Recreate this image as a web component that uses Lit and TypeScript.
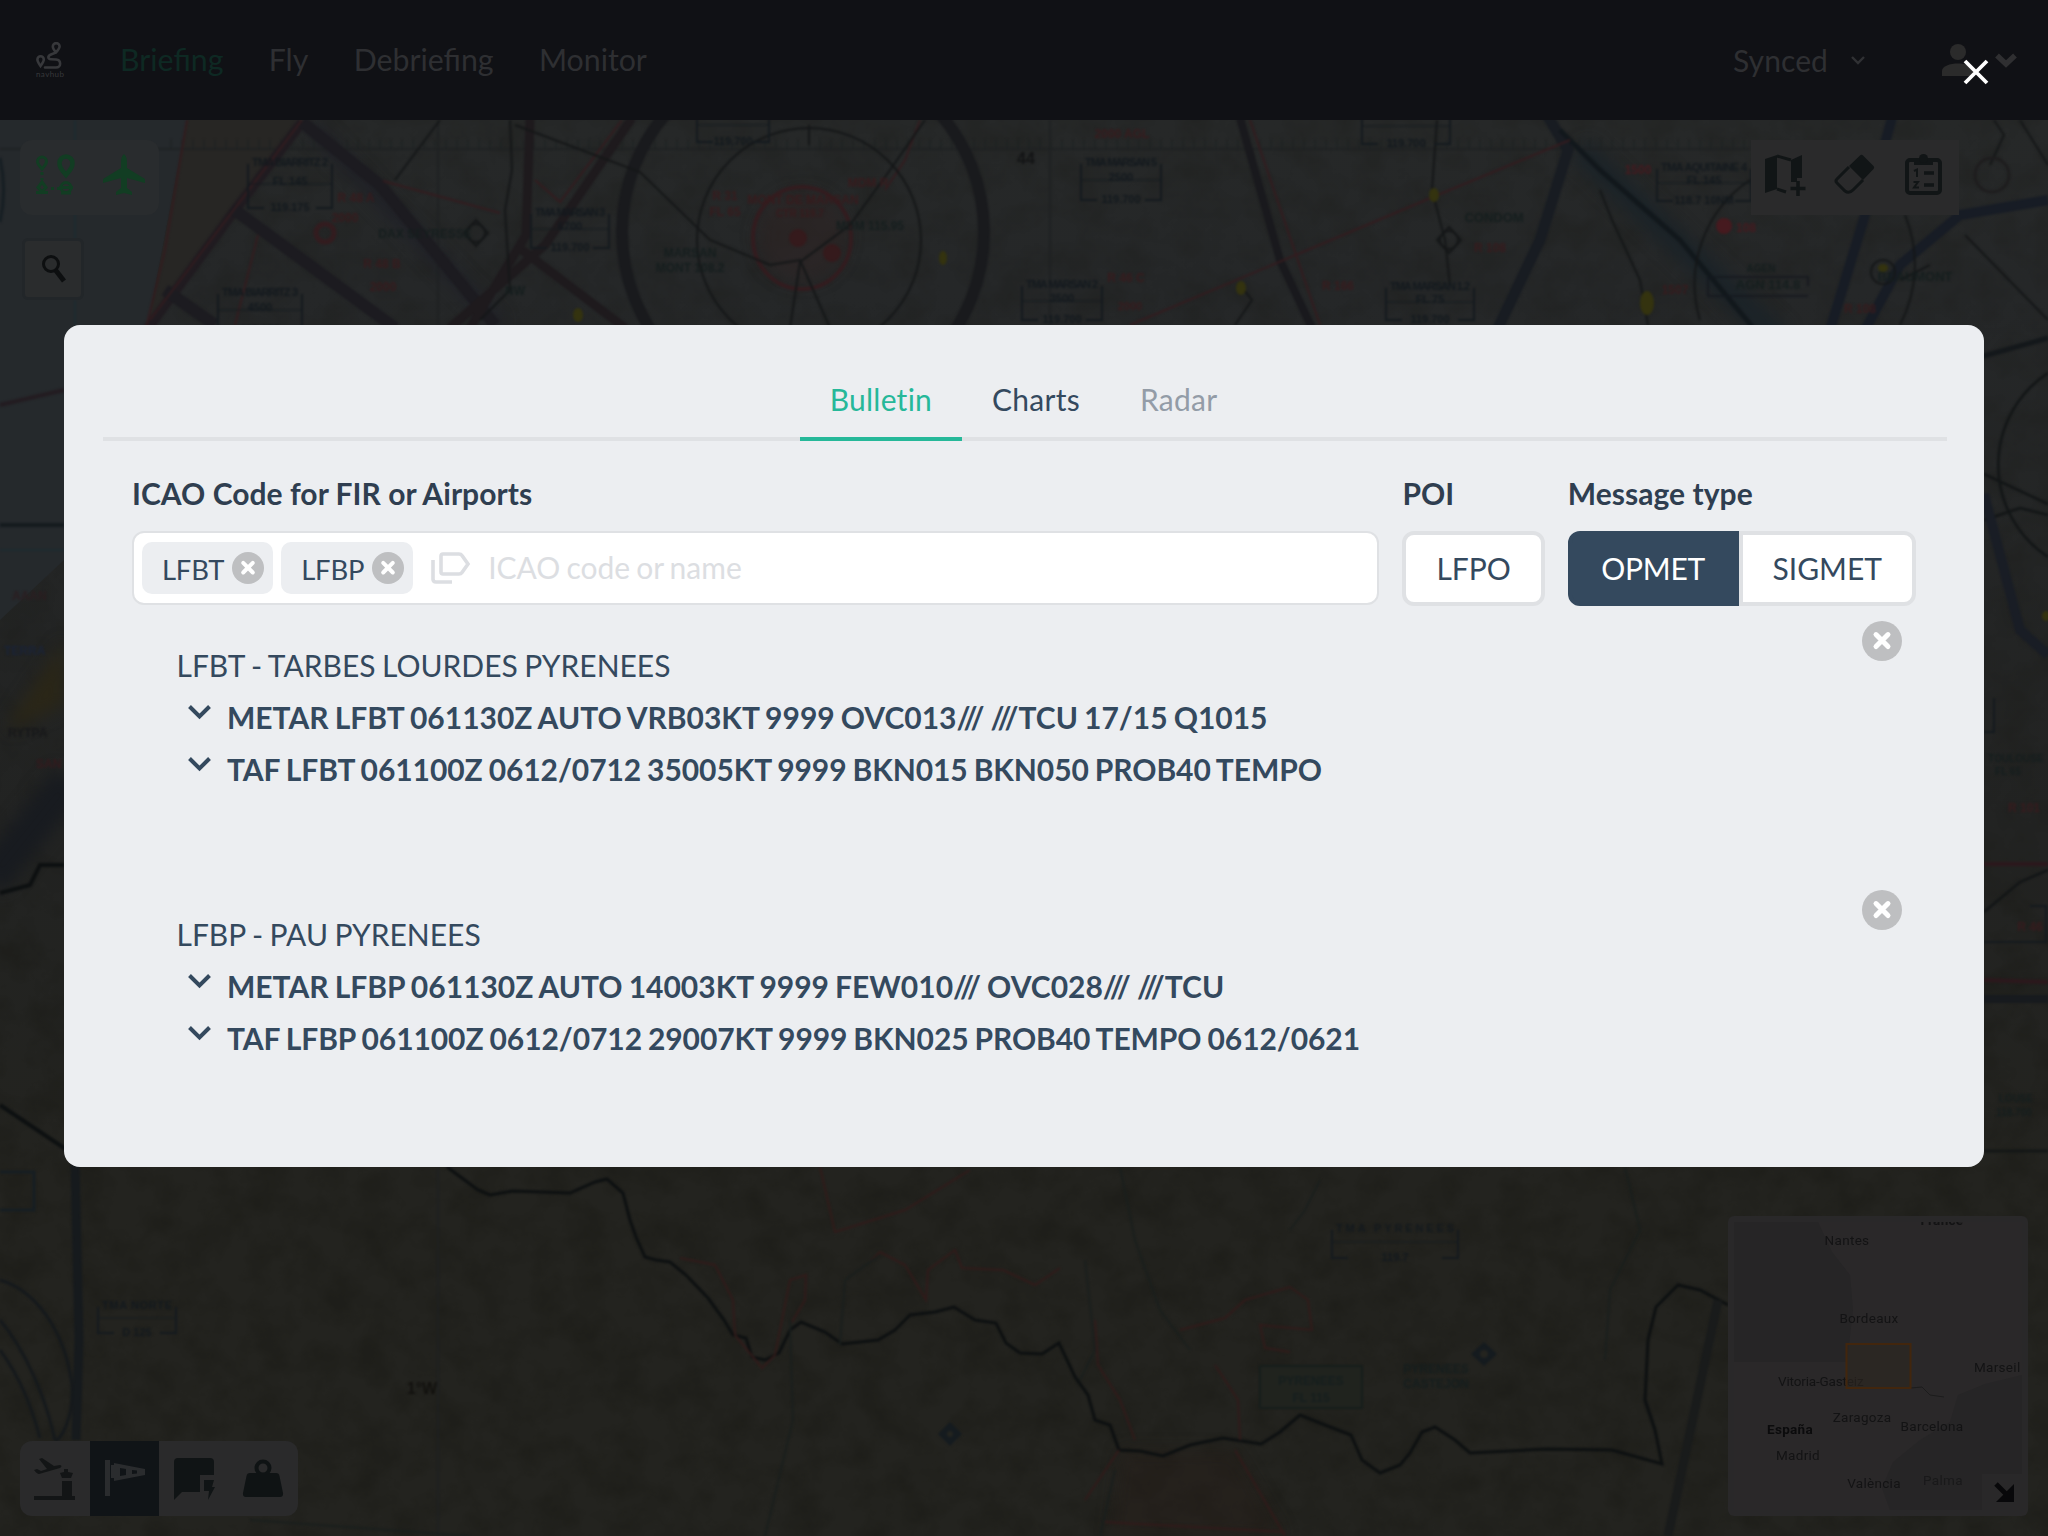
import { LitElement, html, svg, css } from "lit";
import { customElement, property } from "lit/decorators.js";

interface Station { code: string; name: string; lines: string[]; }

const STATIONS: Station[] = [
  {
    code: "LFBT",
    name: "TARBES LOURDES PYRENEES",
    lines: [
      "METAR LFBT 061130Z AUTO VRB03KT 9999 OVC013/// ///TCU 17/15 Q1015",
      "TAF LFBT 061100Z 0612/0712 35005KT 9999 BKN015 BKN050 PROB40 TEMPO",
    ],
  },
  {
    code: "LFBP",
    name: "PAU PYRENEES",
    lines: [
      "METAR LFBP 061130Z AUTO 14003KT 9999 FEW010/// OVC028/// ///TCU",
      "TAF LFBP 061100Z 0612/0712 29007KT 9999 BKN025 PROB40 TEMPO 0612/0621",
    ],
  },
];

const removeIcon = (size: number) => html`<svg width=${size} height=${size} viewBox="0 0 40 40">
  <circle cx="20" cy="20" r="20" fill="#bebfc1"></circle>
  <path d="M14 13.600 L26 25.600 M26 13.600 L14 25.600" stroke="#fff" stroke-width="5" stroke-linecap="round"></path>
</svg>`;

const chartBox = (x: number, y: number, w: number, h: number, a: string, b: string, c: string) => svg`
  <g stroke="#141a1f" fill="none" stroke-width="2">
    <path d="M${x} ${y + 4} V${y + h} H${x + 16} M${x + w - 16} ${y + h} H${x + w} V${y + 4}"></path>
    <path d="M${x} ${y + h / 2} H${x + w}" stroke-width="1"></path>
  </g>
  <g fill="#13191e" font-size="11" font-weight="700" text-anchor="middle">
    ${a ? svg`<text x=${x + w / 2} y=${y + 6} textLength=${w - 8}>${a}</text>` : ""}
    ${b ? svg`<text x=${x + w / 2} y=${y + h / 2 + 1}>${b}</text>` : ""}
    <text x=${x + w / 2} y=${y + h + 3}>${c}</text>
  </g>`;

@customElement("chart-map")
class ChartMap extends LitElement {
  static styles = css`
    :host { display: block; width: 2048px; height: 1416px; }
    svg { display: block; }
    text { font-family: "Liberation Sans", sans-serif; }
  `;
  render() {
    return html`<svg width="2048" height="1416" viewBox="0 120 2048 1416">
      <defs>
        <linearGradient id="land" x1="0" y1="0" x2="0" y2="1">
          <stop offset="0" stop-color="#262828"></stop>
          <stop offset="0.12" stop-color="#252728"></stop>
          <stop offset="0.5" stop-color="#222322"></stop>
          <stop offset="0.75" stop-color="#23231f"></stop>
          <stop offset="1" stop-color="#23231f"></stop>
        </linearGradient>
        <filter id="soft" x="-5%" y="-5%" width="110%" height="110%" color-interpolation-filters="sRGB"><feGaussianBlur stdDeviation="0.9"></feGaussianBlur></filter>
        <filter id="wide" x="-20%" y="-20%" width="140%" height="140%" color-interpolation-filters="sRGB"><feGaussianBlur stdDeviation="8"></feGaussianBlur></filter>
        <filter id="relief" x="0" y="0" width="100%" height="100%" color-interpolation-filters="sRGB">
          <feTurbulence type="fractalNoise" baseFrequency="0.028 0.032" numOctaves="5" seed="8"></feTurbulence>
          <feColorMatrix values="0 0 0 0 0.09  0 0 0 0 0.09  0 0 0 0 0.07  0 2.4 0 0 -0.95"></feColorMatrix>
        </filter>
      </defs>
      <rect y="120" width="2048" height="1416" fill="url(#land)"></rect>
      <rect y="900" width="2048" height="636" filter="url(#relief)" opacity="0.35"></rect>
      <rect y="120" width="2048" height="780" filter="url(#relief)" opacity="0.2"></rect>
      <path d="M0 120 H187 L148 325 L64 560 L0 620 Z" fill="#25292c"></path>
      <path d="M187 120 H302 L235 215 L148 325 Z" fill="#272624"></path>
      <g filter="url(#wide)">
        <ellipse cx="802" cy="237" rx="45" ry="45" fill="#302423" opacity="0.5"></ellipse>
        <path d="M1580 150 L1780 340" stroke="#1b2328" stroke-width="24"></path>
        <path d="M310 125 L500 325" stroke="#1f2028" stroke-width="12"></path>
        <path d="M10 720 L64 640 V705 L10 730 Z" fill="#2a2617"></path>
        <path d="M-10 880 L70 780" stroke="#181b20" stroke-width="36"></path>
        <path d="M1120 1450 L1235 1450 L1285 1536 H1110 Z" fill="#271d1a" opacity="0.4"></path>
      </g>
      <g filter="url(#soft)" fill="none">
        <g stroke="#1e2122" stroke-width="1.5">
          <path d="M0 149 H1750 M438 120 V325 M438 1167 V1536 M1050 120 V325"></path>
          <path d="M170 144 H1750" stroke-dasharray="2 9" stroke-width="9" opacity="0.6"></path>
          <path d="M75 120 V240 M0 550 H64 M75 300 V325" stroke="#1d2c32"></path>
          <path d="M0 525 H64" stroke="#151b1f" stroke-width="4"></path>
        </g>
        <g stroke="#1c1b20" stroke-width="12">
          <path d="M302 122 L235 210 L148 328" stroke="#201b20" stroke-width="10"></path>
          <path d="M302 122 L380 185 L495 325 M232 208 L395 328 M165 290 L215 325"></path>
          <path d="M632 118 L545 245 L450 328 M530 118 L526 235 L470 328 M522 250 L625 328" stroke="#1e1a1d" stroke-width="9"></path>
          <path d="M1240 118 L1280 260 L1312 328" stroke="#19191d" stroke-width="8"></path>
          <path d="M1545 112 L1568 150 L1540 240 L1498 328" stroke="#181c22" stroke-width="11"></path>
          <path d="M1560 130 L1600 170 L1680 240 L1755 330" stroke="#12181c" stroke-width="5"></path>
          <path d="M1892 118 L1865 215 L1830 330 M2048 200 L1960 215 L1900 265 L1865 330" stroke="#171c25" stroke-width="10"></path>
          <circle cx="803" cy="232" r="181" stroke="#191a1d"></circle>
        </g>
        <g stroke="#331c1f" stroke-width="2">
          <path d="M187 120 L165 250 L146 328 M258 235 L235 325 M383 181 L500 213 M535 180 L560 202 L622 120 M302 120 L150 320"></path>
          <path d="M1570 140 L1433 197 L1130 325 M1250 120 L1320 325 M920 120 L905 160 L885 190"></path>
          <circle cx="325" cy="233" r="9" stroke-width="5"></circle>
          <ellipse cx="802" cy="238" rx="49" ry="51" stroke-width="4"></ellipse>
          <path d="M0 405 L64 390" stroke="#231c21" stroke-width="4"></path>
        </g>
        <g stroke="#151718" stroke-width="2">
          <circle cx="809" cy="240" r="112"></circle>
          <path d="M809 125 V145 M510 120 L512 170 L505 210 L510 290 L480 320 M515 125 L640 172 L710 240 L770 265 L800 260 L830 328 M790 328 L800 262 L850 225 L890 170 L925 120 M1437 120 L1432 190 L1445 240 L1450 285 M440 120 L395 180 M1240 285 L1252 300 L1235 325"></path>
          <path d="M1600 190 L1612 220 L1640 280 L1648 325 M1700 320 A125 125 0 0 1 1750 180 M1900 325 A130 130 0 0 0 1905 215 M1994 120 L2004 135 L1990 165 M2020 120 L2048 165 M1965 235 L2048 320 M1900 280 L1930 265"></path>
          <path d="M476 220 L488 233 L476 246 L464 233 Z M1449 227 L1461 240 L1449 253 L1437 240 Z"></path>
          <circle cx="476" cy="233" r="9"></circle><circle cx="1449" cy="240" r="9"></circle>
          <circle cx="1992" cy="175" r="17" stroke="#1e1d1e" stroke-width="3"></circle>
          <circle cx="1883" cy="272" r="12"></circle>
        </g>
        <g stroke="#0d1011" stroke-width="3">
          <path d="M447 1167 L478 1190 L490 1195 L513 1191 L570 1193 L595 1182 L607 1179 L623 1193 L630 1220 L636 1237 L645 1257 L656 1260 L670 1262 L686 1275 L708 1298 L724 1320 L733 1335 L746 1338 L752 1357 L765 1360 L779 1353 L790 1330 L801 1322 L825 1332 L842 1344 L878 1340 L895 1330 L910 1315 L935 1312 L954 1307 L975 1320 L996 1323 L1006 1343 L1020 1353 L1042 1354 L1059 1343 L1075 1377 L1088 1395 L1095 1420 L1110 1425 L1119 1450 L1140 1451 L1163 1456 L1190 1445 L1223 1438 L1261 1444 L1280 1432 L1300 1415 L1325 1425 L1351 1435 L1362 1460 L1380 1473 L1400 1465 L1410 1453 L1422 1432 L1435 1427 L1455 1440 L1470 1453 L1547 1449 L1612 1450 L1662 1464 L1655 1430 L1645 1400 L1648 1340 L1656 1307 L1678 1285 L1700 1290 L1728 1305"></path>
          <path d="M0 893 L30 885 L40 865 L64 865 M0 1105 L70 1152" stroke-width="4"></path>
        </g>
        <path d="M75 1160 L79 1340 L76 1440" stroke="#161a1d" stroke-width="9"></path>
        <path d="M1718 1300 L1668 1536" stroke="#191b1b" stroke-width="9"></path>
        <path d="M0 1280 C35 1290 65 1330 72 1385 C74 1420 60 1440 55 1441 M0 1320 C25 1350 45 1395 55 1440 M0 1350 C15 1370 30 1400 40 1438" stroke="#15191c" stroke-width="3"></path>
        <g stroke="#311b1a" stroke-width="2">
          <path d="M680 1258 L715 1265 L733 1300 L735 1335 L762 1368 L775 1355 L790 1280 L806 1275 L805 1300 L792 1322 M870 1262 L880 1252 L905 1265 L926 1300 L928 1270 L955 1250 L962 1268 L1003 1270 L1035 1285 L1060 1268 M1095 1320 L1098 1365 L1120 1400 L1135 1440 M1180 1330 L1225 1318 L1245 1300 L1290 1287 L1308 1300 L1312 1330 L1260 1325 L1265 1348 L1290 1352 M1215 1365 L1238 1400 L1240 1440"></path>
          <path d="M820 1167 L835 1232 L905 1210 L970 1170 M1105 1522 L1285 1532 M1119 1450 L1085 1500 M1235 1450 L1285 1536"></path>
        </g>
        <g stroke="#1a1f1d" stroke-width="2">
          <path d="M1120 1167 L1135 1240 L1160 1310 L1190 1350 M1085 1260 L1095 1350 L1080 1380 M790 1320 L793 1420 L765 1536 M840 1345 L845 1280 L880 1255 M1625 1167 L1640 1230 L1610 1290 L1605 1360 M1115 1470 L1100 1536 M250 1520 L470 1536 M1290 1230 L1305 1210 L1320 1180"></path>
        </g>
        <path d="M1980 357 L2048 338" stroke="#14181b" stroke-width="5"></path>
        <path d="M2048 373 A110 110 0 0 0 2048 557 M1984 474 L2048 504 M1984 520 L2020 508 L2048 515 M1984 912 L2020 882 L2048 870 M1984 1151 H2048" stroke="#121516" stroke-width="2.5"></path>
        <path d="M1984 494 L2020 630 L2048 655" stroke="#191d25" stroke-width="10"></path>
        <path d="M1984 864 H2048 M1984 980 L2048 982" stroke="#2c181c" stroke-width="4"></path>
        <path d="M1984 999 H2048" stroke="#171a1e" stroke-width="8"></path>
        <path d="M1994 698 V732 H1984 M2030 906 H2046 V942 H1984" stroke="#141a1f" stroke-width="2"></path>
        <g stroke="none" fill="#34330f">
          <ellipse cx="1434" cy="195" rx="5" ry="7"></ellipse><ellipse cx="1241" cy="288" rx="5" ry="7"></ellipse>
          <ellipse cx="1647" cy="303" rx="7" ry="12"></ellipse><ellipse cx="943" cy="258" rx="4" ry="7"></ellipse>
          <ellipse cx="1883" cy="268" rx="5" ry="4"></ellipse><ellipse cx="578" cy="315" rx="5" ry="7"></ellipse>
          <ellipse cx="2046" cy="616" rx="4" ry="5"></ellipse>
        </g>
        <g stroke="none" fill="#351a1c">
          <circle cx="798" cy="238" r="9"></circle><circle cx="832" cy="253" r="9"></circle>
          <circle cx="1724" cy="226" r="8" fill="#461a1f"></circle>
        </g>
        <g stroke="none">
          ${chartBox(248, 160, 84, 48, "TMA BIARRITZ 2", "FL 145", "119.175")}
          ${chartBox(218, 290, 84, 40, "TMA BIARRITZ 3", "4500", "119.175")}
          ${chartBox(531, 210, 78, 38, "TMA MARSAN 3", "6700", "119.700")}
          ${chartBox(697, 108, 72, 34, "", "", "119.700")}
          ${chartBox(1081, 160, 80, 40, "TMA MARSAN 5", "2500", "119.700")}
          ${chartBox(1022, 282, 80, 38, "TMA MARSAN 2", "3500", "119.700")}
          ${chartBox(1362, 108, 88, 36, "", "", "119.700")}
          ${chartBox(1386, 284, 88, 36, "TMA MARSAN 1.2", "FL 75", "119.700")}
          ${chartBox(1657, 165, 94, 36, "TMA AQUITAINE 4", "FL 145", "118.7 10NM")}
          ${chartBox(98, 1303, 78, 30, "TMA NORTE", "", "D 125")}
          ${chartBox(1332, 1226, 126, 32, "TMA PYRENEES", "", "119.7")}
          <rect x="1260" y="1366" width="102" height="42" fill="#20231e" stroke="#161d1b" stroke-width="2"></rect>
          <g fill="#151e1e" font-size="13" text-anchor="middle" font-weight="700">
            <text x="1311" y="1385" font-size="12">PYRENEES</text><text x="1311" y="1402" font-size="12">FL 115</text>
            <text x="1436" y="1373" font-size="12">PYRENEES</text><text x="1436" y="1388" font-size="12">CASTEJON</text>
            <text x="422" y="1394" font-size="16" fill="#12110e">1°W</text>
            <text x="1026" y="164" font-size="16" fill="#131415">44</text>
            <text x="1494" y="222">CONDOM</text><text x="1915" y="281">BEAUMONT</text>
            <text x="1761" y="272" font-size="10">AGEN</text><text x="1768" y="289">AGN 114.8</text>
            <text x="425" y="238" font-size="12">DAX SEYRESSE</text><text x="870" y="230" font-size="12">MDM 115.95</text>
            <text x="690" y="257" font-size="12">MARSAN</text><text x="690" y="272" font-size="12">MONT 108.2</text>
            <text x="515" y="295" font-size="12">NW</text>
            <text x="2016" y="762" font-size="10">TOULOUSE</text><text x="2008" y="775" font-size="10">FL 65</text>
            <text x="2016" y="1102" font-size="10">LOUSE</text><text x="2014" y="1116" font-size="10">118.700</text>
          </g>
          <path d="M1708 277 H1808 V286 M1708 277 V296 H1808" fill="none" stroke="#15191f" stroke-width="1.500"></path>
          <g fill="#381b1d" font-size="12" font-weight="700" text-anchor="middle">
            <text x="803" y="204">MONT DE MARSAN</text><text x="800" y="217" font-size="10">CTR 119.7</text>
            <text x="868" y="187">MDM R</text><text x="356" y="202">R 48 A</text><text x="345" y="222">2000</text>
            <text x="382" y="268">R 48 B</text><text x="383" y="291">2000</text><text x="1126" y="282">R 46 C</text>
            <text x="1130" y="310" font-size="11">2000</text><text x="1122" y="138">2000 AGL</text><text x="1490" y="252">R 108</text>
            <text x="1338" y="290">R 166</text><text x="1746" y="232" fill="#461a1f">108</text><text x="1638" y="174" fill="#461a1f">1500</text>
            <text x="1675" y="294">1507</text><text x="1860" y="313">R 108</text><text x="725" y="200">R 31</text><text x="725" y="216">FL 65</text>
            <text x="2024" y="812">R 101</text><text x="2030" y="931">R 46</text>
          </g>
          <g font-weight="700" font-size="12">
            <text x="12" y="600" fill="#2b1d20">AAAN</text><text x="4" y="655" fill="#1a2337">TERRA</text><text x="36" y="768" fill="#341a1d">SAN</text>
            <text x="8" y="737" fill="#17181a">RYTPA</text>
          </g>
          <path d="M1484 1342 L1497 1354 L1484 1366 L1471 1354 Z M950 1422 L962 1434 L950 1446 L938 1434 Z" fill="#151b1f"></path>
          <circle cx="1484" cy="1354" r="4" fill="#24241f"></circle><circle cx="950" cy="1434" r="3" fill="#24241f"></circle>
        </g>
        <path d="M0 1172 H34 V1210 H0 M0 158 C5 180 5 200 0 222" stroke="#161e23" stroke-width="3"></path>
      </g>
    </svg>`;
  }
}

@customElement("mini-map")
class MiniMap extends LitElement {
  static styles = css`
    :host { display: block; width: 300px; height: 300px; border-radius: 6px; overflow: hidden; }
    svg { display: block; }
    text { font-family: Roboto, sans-serif; font-size: 13.5px; letter-spacing: 0.3px; }
  `;
  render() {
    return html`<svg width="300" height="300" viewBox="1728 1216 300 300">
      <defs><clipPath id="inner"><rect x="1734" y="1222" width="288" height="288"></rect></clipPath></defs>
      <rect x="1728" y="1216" width="300" height="300" fill="#292829"></rect>
      <g clip-path="url(#inner)">
        <rect x="1734" y="1222" width="288" height="288" fill="#2a2829"></rect>
        <path d="M1734 1222 H1818 L1832 1252 L1850 1275 L1853 1310 L1847 1362 L1734 1362 Z" fill="#262526"></path>
        <path d="M2022 1375 L1985 1384 L1958 1395 L1950 1422 L1920 1440 L1893 1462 L1882 1488 L1890 1510 H2022 Z" fill="#262526"></path>
        <path d="M1911 1388 L1922 1387 L1930 1395 L1944 1397" fill="none" stroke="#1c1c1c"></path>
        <g fill="#131314" text-anchor="middle">
          <text x="1942" y="1225" font-weight="700">France</text>
          <text x="1847" y="1245">Nantes</text>
          <text x="1869" y="1323">Bordeaux</text>
          <text x="1974" y="1372" text-anchor="start">Marseil</text>
          <text x="1821" y="1386" textLength="86">Vitoria-Gasteiz</text>
          <text x="1862" y="1422">Zaragoza</text>
          <text x="1932" y="1431">Barcelona</text>
          <text x="1790" y="1434" font-weight="700" fill="#0b0b0c">España</text>
          <text x="1798" y="1460">Madrid</text>
          <text x="1874" y="1488">València</text>
          <text x="1943" y="1485" fill="#19191a">Palma</text>
        </g>
        <rect x="1846.5" y="1344" width="64" height="44" fill="#2d271f" fill-opacity="0.6" stroke="#42260d" stroke-width="2"></rect>
      </g>
      <rect x="1982" y="1474" width="40" height="36" fill="#292829"></rect>
      <path d="M1996 1484 L2008 1496" stroke="#08080a" stroke-width="5"></path>
      <path d="M2014 1484 V1502 H1996 Z" fill="#08080a"></path>
    </svg>`;
  }
}

@customElement("top-bar")
class TopBar extends LitElement {
  static styles = css`
    :host { display: block; }
    .bar { box-sizing: border-box; height: 120px; background: #101115; display: flex; align-items: center; padding: 0 30px 0 34px; color: #2e2f32; font-size: 30px; line-height: 36px; letter-spacing: 0.1px; }
    .logo { width: 32px; margin-right: 54px; }
    .nav { display: flex; gap: 45.3px; flex: 1; padding-bottom: 2px; font-size: 30.3px; letter-spacing: 0; }
    .active { color: #0e2923; }
    .sync { display: flex; align-items: center; gap: 22px; margin-right: 76px; padding-bottom: 1px; }
    .user { display: flex; align-items: center; gap: 20px; }
    svg { display: block; }
  `;
  render() {
    return html`<header class="bar">
      <svg class="logo" width="32" height="36" viewBox="0 0 32 36">
        <g fill="none" stroke="#37383b" stroke-width="2.6" stroke-linecap="round">
          <path d="M22 10.500 C19.500 7.500 18.800 6 18.800 4.500 A3.400 3.400 0 0 1 25.600 4.500 C25.600 6 24.500 7.500 22 10.500 L17 12.500 C13.500 14 13.500 17 17 17.200 L22 17.500 C27.500 18 27.500 25.500 22 25.500 H11"></path>
          <path d="M6.500 24 C4 20.500 3.400 19 3.400 17.500 A3.200 3.200 0 0 1 9.800 17.500 C9.800 19 9 20.500 6.500 24 Z"></path>
        </g>
        <text x="2" y="34.500" font-size="8" fill="#37383b" textLength="28">navhub</text>
      </svg>
      <nav class="nav"><span class="active">Briefing</span><span>Fly</span><span>Debriefing</span><span>Monitor</span></nav>
      <div class="sync"><span>Synced</span>
        <svg width="16" height="12" viewBox="0 0 16 12"><path d="M2 3 L8 9 L14 3" fill="none" stroke="#303134" stroke-width="2.400"></path></svg>
      </div>
      <div class="user">
        <svg width="32" height="34" viewBox="0 0 32 34" fill="#2b2b2b"><circle cx="16" cy="9" r="8"></circle><path d="M0 33 V28 C0 18 32 18 32 28 V33 Z"></path></svg>
        <svg width="24" height="18" viewBox="0 0 24 18"><path d="M3 4.500 L12 13 L21 4.500" fill="none" stroke="#2f2f31" stroke-width="5.500"></path></svg>
      </div>
    </header>`;
  }
}

@customElement("tool-bars")
class ToolBars extends LitElement {
  static styles = css`
    :host { display: flex; flex-direction: column; justify-content: space-between; box-sizing: border-box; height: 1416px; padding: 20px; }
    .row { display: flex; justify-content: space-between; align-items: flex-start; }
    .end { align-items: flex-end; }
    .left { display: flex; flex-direction: column; gap: 23px; }
    .group { display: flex; border-radius: 12px; overflow: hidden; background: #2a2a2b; }
    .sea { background: #292c2e; }
    .square { border-radius: 0; margin-right: 69px; }
    .cell { width: 69.5px; height: 75px; display: grid; place-items: center; }
    .high .cell { box-sizing: border-box; padding-bottom: 5px; }
    .on { background: #101417; }
    .search { width: 56px; height: 56px; margin-left: 2px; border: 3px solid #222629; border-radius: 6px; background: #2a2c2d; display: grid; place-items: center; }
    svg { display: block; }
  `;
  render() {
    return html`
      <div class="row">
        <div class="left">
          <div class="group sea high">
            <div class="cell"><svg width="42" height="42" viewBox="0 0 42 42" fill="none" stroke="#123d23" stroke-width="3">
              <path d="M8 15 C4 10.500 3.500 9 3.500 7.500 A4.500 4.500 0 0 1 12.500 7.500 C12.500 9 12 10.500 8 15 Z"></path>
              <path d="M32 21 C26 14 25.500 12 25.500 9 A6.500 6.500 0 0 1 38.500 9 C38.500 12 38 14 32 21 Z" stroke-width="4.500"></path>
              <path d="M8 28 L12 33.500 L8 38 L4 33.500 Z M2 38.500 H14"></path><circle cx="32" cy="33.500" r="5"></circle><path d="M25 33.500 H39 M27 39 H37"></path>
              <path d="M8 18 V26 M17 34.500 H26" stroke-dasharray="3 3"></path></svg></div>
            <div class="cell"><svg width="42" height="42" viewBox="0 0 42 42"><path d="M21 0 C23.500 2 24 5 24 9 V14 L42 25 V29 L24 24 V34 L29 38 V41 L21 39 L13 41 V38 L18 34 V24 L0 29 V25 L18 14 V9 C18 5 18.500 2 21 0 Z" fill="#123d23"></path></svg></div>
          </div>
          <div class="search"><svg width="28" height="32" viewBox="0 0 28 32" fill="none" stroke="#0d0f10"><circle cx="12" cy="11" r="7.500" stroke-width="3"></circle><path d="M16.500 17 L25 28" stroke-width="5"></path></svg></div>
        </div>
        <div class="group square high">
          <div class="cell"><svg width="42" height="42" viewBox="0 0 42 42"><path d="M1 5 L13 1 V35 L1 39 Z M27 6 L38 1 V24 H33 V28 H27 Z" fill="#111516"></path><path d="M13 2 L27 6 M13 35 L22 38" stroke="#111516" stroke-width="3"></path><path d="M34 27 V42 M26.500 34.500 H41.500" stroke="#111516" stroke-width="3.500"></path></svg></div>
          <div class="cell"><svg width="42" height="42" viewBox="0 0 42 42"><path d="M15 12 L26 1.500 Q27.500 0 29 1.500 L39.500 12 Q41 13.500 39.500 15 L29 26 Z" fill="#111516"></path><path d="M15 13 L3 25 Q1 27 3 29 L11 37 Q15 40 19 36 L29 26" fill="none" stroke="#111516" stroke-width="3"></path></svg></div>
          <div class="cell"><svg width="42" height="42" viewBox="0 0 42 42" fill="none" stroke="#111516"><rect x="4" y="6" width="33" height="33" rx="3" stroke-width="4"></rect><path d="M11 4 H30 V11 H11 Z" fill="#111516" stroke="none"></path><circle cx="20.500" cy="4.500" r="4.500" fill="#111516" stroke="none"></circle><path d="M21 19 H31 M21 31 H31" stroke-width="3.500"></path><path d="M11 17 L14 15.500 V23 M10.500 28 H15 L11 33.500 H16" stroke-width="2"></path></svg></div>
        </div>
      </div>
      <div class="row end">
        <div class="group">
          <div class="cell"><svg width="42" height="42" viewBox="0 0 42 42" fill="#131516"><path d="M0 38 H41 V42 H0 Z M28 23 H38 V38 H28 Z M26 15 L30 14 V11 H34 V14 L39 15 L37 20 H28 Z"></path><path d="M0 12 L3 11 L7 13 L13 11 L5 1 L8 0 L20 8 L26 7 Q29 8 26 10 L5 16 Q3 16 0 12 Z"></path></svg></div>
          <div class="cell on"><svg width="42" height="42" viewBox="0 0 42 42" fill="#2a2c2e"><path d="M2 2 H7 V38 H2 Z M8 7 H11 V20 H8 Z"></path><path d="M11 5 L42 11 V17 L11 23 Z M17 10 V18 L23 17 V11 Z M29 12 V16 L34 15.500 V12.500 Z" fill-rule="evenodd"></path></svg></div>
          <div class="cell"><svg width="42" height="42" viewBox="0 0 42 42" fill="#101415"><path d="M5 0 H37 Q41 0 41 4 V17 H27 V34 H9 L1 42 V4 Q1 0 5 0 Z"></path><path d="M31 22 H41 L39 29 H42 L35 42 L36 33 H31 Z"></path></svg></div>
          <div class="cell"><svg width="42" height="40" viewBox="0 0 42 40"><circle cx="21" cy="9" r="6.500" fill="none" stroke="#0f1314" stroke-width="4"></circle><path d="M8 14 H34 Q37 14 37.500 17 L41 34 Q41.500 38 38 38 H4 Q0.500 38 1 34 L4.500 17 Q5 14 8 14 Z" fill="#0f1314"></path></svg></div>
        </div>
        <mini-map></mini-map>
      </div>`;
  }
}

@customElement("station-report")
class StationReport extends LitElement {
  @property({ attribute: false }) station!: Station;
  static styles = css`
    :host { display: flex; justify-content: space-between; align-items: flex-start; height: 269px; }
    .body { padding: 33px 0 0 44.5px; color: #34495e; font-size: 30px; line-height: 52px; white-space: nowrap; word-spacing: -1.2px; }
    .line { display: flex; font-weight: 700; padding-left: 10px; }
    .line:last-child { letter-spacing: -0.08px; }
    .line svg { display: block; margin: 12.5px 15.5px 0 0; }
    .close { margin: 15px 14px 0 0; }
    .close svg { display: block; }
  `;
  render() {
    return html`
      <div class="body">
        <div>${this.station.code} - ${this.station.name}</div>
        ${this.station.lines.map((l) => html`<div class="line">
          <svg width="25" height="18" viewBox="0 0 25 18"><path d="M2.500 2.500 L12.500 12.500 L22.500 2.500" fill="none" stroke="#34495e" stroke-width="4"></path></svg>
          <span>${l}</span></div>`)}
      </div>
      <div class="close">${removeIcon(40)}</div>`;
  }
}

@customElement("weather-dialog")
class WeatherDialog extends LitElement {
  static styles = css`
    :host { display: block; box-sizing: border-box; width: 1920px; height: 842px; padding: 39px 37px 0 39px; border-radius: 16px; background: #eceef1; color: #34495e; font-size: 30px; line-height: 36px; }
    .tabs { display: flex; justify-content: center; box-sizing: border-box; height: 77px; padding-right: 3px; box-shadow: inset 0 -4px 0 #dfe1e4; letter-spacing: 0.25px; font-variant-ligatures: none; }
    .tab { box-sizing: border-box; height: 77px; padding: 17px 30px 0; }
    .current { color: #26b899; border-bottom: 4px solid #26b899; }
    .muted { color: #939ca7; }
    .form { display: flex; gap: 23px; padding: 34px 31px 0 29px; }
    .label { font-weight: 700; color: #2f3e50; margin-bottom: 20px; letter-spacing: 0.04px; }
    .grow { flex: 1; }
    .input { box-sizing: border-box; height: 74px; display: flex; align-items: center; border: 2px solid #dfe1e4; border-radius: 12px; background: #fff; padding-left: 8px; }
    .chip { box-sizing: border-box; height: 52px; display: flex; align-items: center; gap: 8px; margin-right: 8px; padding: 0 9px 0 20px; border-radius: 10px; background: #eceef1; font-size: 27.4px; letter-spacing: -0.2px; }
    .chip span { padding-top: 3px; }
    .chip svg { display: block; }
    .tag { display: block; margin: 0 17px 0 10px; }
    .hint { color: #dcdee2; word-spacing: -1.6px; padding-bottom: 2px; }
    .btn { box-sizing: border-box; height: 75px; border: 4px solid #dfe1e4; border-radius: 12px; background: #fff; padding: 15px 30px 0; }
    .pair { display: flex; }
    .pair .btn { border-radius: 0 12px 12px 0; }
    .pair .dark { background: #34495e; border-color: #34495e; border-radius: 12px 0 0 12px; color: #fff; letter-spacing: -0.25px; padding: 15px 29.5px 0; }
    .reports { padding: 0 31px 0 29px; }
  `;
  render() {
    return html`
      <nav class="tabs"><div class="tab current">Bulletin</div><div class="tab">Charts</div><div class="tab muted">Radar</div></nav>
      <div class="form">
        <div class="grow"><div class="label">ICAO Code for FIR or Airports</div>
          <div class="input">
            ${STATIONS.map((s) => html`<span class="chip"><span>${s.code}</span>${removeIcon(32)}</span>`)}
            <svg class="tag" width="40" height="34" viewBox="0 0 40 34" fill="none" stroke="#dcdee2" stroke-width="3.600"><path d="M12 3 H28 Q30 3 31 4.500 L37 13 L31 21.500 Q30 23 28 23 H12 Q10 23 10 21 V5 Q10 3 12 3 Z"></path><path d="M2 9 V28 Q2 31 5 31 H21"></path></svg>
            <span class="hint">ICAO code or name</span>
          </div></div>
        <div><div class="label">POI</div><div class="btn">LFPO</div></div>
        <div><div class="label">Message type</div><div class="pair"><div class="btn dark">OPMET</div><div class="btn">SIGMET</div></div></div>
      </div>
      <div class="reports">${STATIONS.map((s) => html`<station-report .station=${s}></station-report>`)}</div>`;
  }
}

@customElement("app-root")
class AppRoot extends LitElement {
  static styles = css`
    :host { display: block; position: relative; width: 2048px; height: 1536px; overflow: hidden; background: #101115; font-family: Lato, sans-serif; }
    .stage { display: grid; }
    .stage > * { grid-area: 1 / 1; }
    .dialog { position: absolute; left: 64px; top: 325px; }
    .dismiss { position: absolute; left: 1963px; top: 59px; }
  `;
  render() {
    return html`
      <top-bar></top-bar>
      <main class="stage"><chart-map></chart-map><tool-bars></tool-bars></main>
      <weather-dialog class="dialog"></weather-dialog>
      <svg class="dismiss" width="26" height="26" viewBox="0 0 26 26"><path d="M2 2 L24 24 M24 2 L2 24" stroke="#fff" stroke-width="3.800"></path></svg>`;
  }
}
